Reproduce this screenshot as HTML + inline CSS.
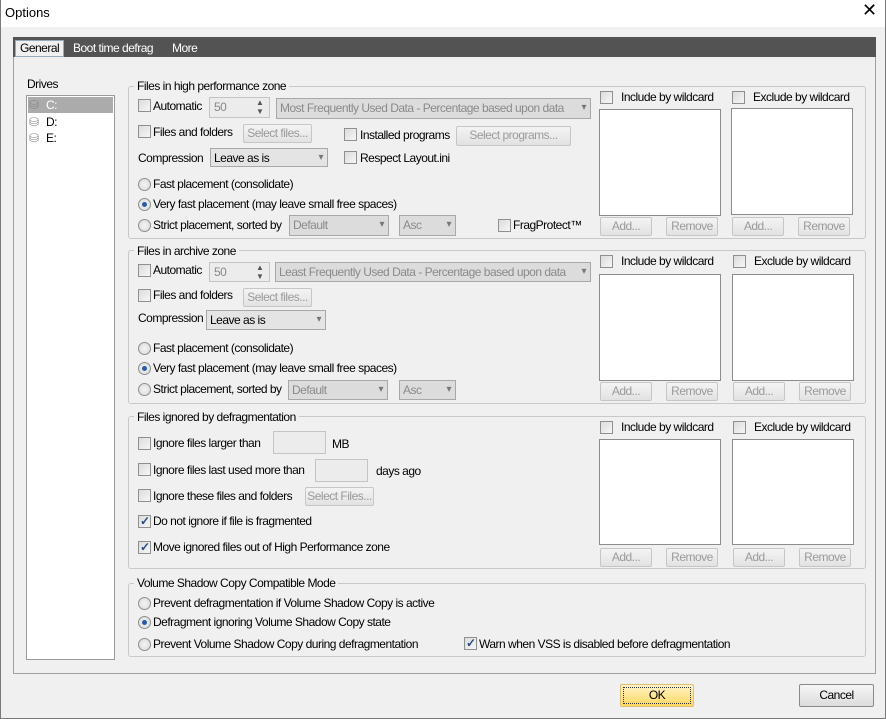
<!DOCTYPE html>
<html><head><style>
*{box-sizing:border-box;margin:0;padding:0}
body{width:886px;height:719px;background:#f0f0f0;font-family:"Liberation Sans",sans-serif;font-size:12px;color:#000;position:relative;overflow:hidden;letter-spacing:-0.5px}
.a{position:absolute}
.t{position:absolute;line-height:14px;white-space:nowrap}
.cb{position:absolute;width:13px;height:13px;border:1px solid #8e8f8f;background:linear-gradient(135deg,#dcdcdc,#f6f6f6)}
.cb.on::after{content:"✓";position:absolute;left:1px;top:-2px;font-size:12px;color:#2a4a80;font-weight:bold}
.rd{position:absolute;width:13px;height:13px;border:1px solid #8e8f8f;border-radius:50%;background:radial-gradient(circle,#f4f4f4,#d8d8d8)}
.rd.on::after{content:"";position:absolute;left:3px;top:3px;width:5px;height:5px;border-radius:50%;background:#2a5aa0}
.grp{position:absolute;border:1px solid #c8c8c8;border-radius:3px}
.gt{position:absolute;background:#f0f0f0;padding:0 3px;line-height:14px;white-space:nowrap}
.btn{position:absolute;border:1px solid #c6c6c6;border-radius:2px;background:linear-gradient(#f4f4f4,#e2e2e2);color:#9a9a9a;text-align:center;line-height:16px;white-space:nowrap;overflow:hidden}
.dd{position:absolute;border:1px solid #a8a8a8;background:#dcdcdc;color:#8a8a8a;padding-left:3px;line-height:18px;white-space:nowrap;overflow:hidden}
.dd::after{content:"▾";position:absolute;right:4px;top:0;color:#777;font-size:10px}
.dd.en{background:#e4e4e4;color:#000}
.lst{position:absolute;background:#fff;border:1px solid #8c8c8c}
.tb{position:absolute;background:#ececec;border:1px solid #c4c4c4}
</style></head><body>
<div class="a" style="left:0;top:0;width:886px;height:27px;background:#fff"></div>
<div class="t" style="left:5px;top:6px;font-size:13px;letter-spacing:0">Options</div>
<div class="t" style="left:862px;top:3px;font-size:18px">✕</div>
<div class="a" style="left:0;top:0;width:886px;height:719px;border:1px solid #7a7a7a;border-top:none"></div>

<div class="a" style="left:13px;top:37px;width:863px;height:20px;background:#535353"></div>
<div class="a" style="left:15px;top:40px;width:49px;height:17px;background:#f0f0f0;border:1px solid #9ab"></div>
<div class="t" style="left:20px;top:41px">General</div>
<div class="t" style="left:73px;top:41px;color:#fff">Boot time defrag</div>
<div class="t" style="left:172px;top:41px;color:#fff">More</div>
<div class="a" style="left:13px;top:57px;width:863px;height:617px;border:1px solid #a0a0a0;border-top:none"></div>

<div class="t" style="left:27px;top:77px">Drives</div>
<div class="lst" style="left:26px;top:95px;width:89px;height:565px;border-color:#9a9a9a"></div>
<div class="a" style="left:28px;top:97px;width:85px;height:16px;background:#ababab"></div>
<div class="t" style="left:29px;top:98px;color:#888">⛁</div><div class="t" style="left:46px;top:98px;color:#fff">C:</div>
<div class="t" style="left:29px;top:115px;color:#888">⛁</div><div class="t" style="left:46px;top:115px">D:</div>
<div class="t" style="left:29px;top:131px;color:#888">⛁</div><div class="t" style="left:46px;top:131px">E:</div>

<!-- group 1 -->
<div class="grp" style="left:128px;top:86px;width:738px;height:153px"></div>
<div class="gt" style="left:134px;top:79px">Files in high performance zone</div>
<div class="cb" style="left:138px;top:99px"></div><div class="t" style="left:153px;top:99px">Automatic</div>
<div class="tb" style="left:209px;top:97px;width:61px;height:21px;color:#888;padding-left:4px;line-height:19px">50</div>
<div class="t" style="left:256px;top:98px;font-size:8px;color:#555;line-height:9px">▲<br>▼</div>
<div class="dd" style="left:276px;top:98px;width:315px;height:21px">Most Frequently Used Data - Percentage based upon data</div>
<div class="cb" style="left:138px;top:125px"></div><div class="t" style="left:153px;top:125px">Files and folders</div>
<div class="btn" style="left:243px;top:124px;width:69px;height:19px">Select files...</div>
<div class="cb" style="left:344px;top:128px"></div><div class="t" style="left:360px;top:128px">Installed programs</div>
<div class="btn" style="left:456px;top:126px;width:115px;height:20px">Select programs...</div>
<div class="t" style="left:138px;top:151px">Compression</div>
<div class="dd en" style="left:210px;top:148px;width:118px;height:19px">Leave as is</div>
<div class="cb" style="left:344px;top:151px"></div><div class="t" style="left:360px;top:151px">Respect Layout.ini</div>
<div class="rd" style="left:138px;top:178px"></div><div class="t" style="left:153px;top:177px">Fast placement (consolidate)</div>
<div class="rd on" style="left:138px;top:198px"></div><div class="t" style="left:153px;top:197px">Very fast placement (may leave small free spaces)</div>
<div class="rd" style="left:138px;top:219px"></div><div class="t" style="left:153px;top:218px">Strict placement, sorted by</div>
<div class="dd" style="left:289px;top:215px;width:100px;height:21px">Default</div>
<div class="dd" style="left:399px;top:215px;width:57px;height:21px">Asc</div>
<div class="cb" style="left:498px;top:219px"></div><div class="t" style="left:513px;top:218px">FragProtect™</div>
<div class="cb" style="left:600px;top:91px"></div><div class="t" style="left:621px;top:90px">Include by wildcard</div>
<div class="lst" style="left:599px;top:109px;width:122px;height:107px"></div>
<div class="btn" style="left:600px;top:217px;width:52px;height:19px">Add...</div>
<div class="btn" style="left:666px;top:217px;width:52px;height:19px">Remove</div>
<div class="cb" style="left:732px;top:91px"></div><div class="t" style="left:753px;top:90px">Exclude by wildcard</div>
<div class="lst" style="left:731px;top:108px;width:122px;height:107px"></div>
<div class="btn" style="left:732px;top:217px;width:52px;height:19px">Add...</div>
<div class="btn" style="left:798px;top:217px;width:52px;height:19px">Remove</div>

<!-- group 2 -->
<div class="grp" style="left:128px;top:250px;width:738px;height:154px"></div>
<div class="gt" style="left:134px;top:244px">Files in archive zone</div>
<div class="cb" style="left:138px;top:264px"></div><div class="t" style="left:153px;top:263px">Automatic</div>
<div class="tb" style="left:209px;top:262px;width:61px;height:20px;color:#888;padding-left:4px;line-height:18px">50</div>
<div class="t" style="left:256px;top:263px;font-size:8px;color:#555;line-height:9px">▲<br>▼</div>
<div class="dd" style="left:275px;top:262px;width:316px;height:20px">Least Frequently Used Data - Percentage based upon data</div>
<div class="cb" style="left:138px;top:289px"></div><div class="t" style="left:153px;top:288px">Files and folders</div>
<div class="btn" style="left:243px;top:288px;width:69px;height:19px">Select files...</div>
<div class="t" style="left:138px;top:311px">Compression</div>
<div class="dd en" style="left:206px;top:310px;width:120px;height:20px">Leave as is</div>
<div class="rd" style="left:138px;top:342px"></div><div class="t" style="left:153px;top:341px">Fast placement (consolidate)</div>
<div class="rd on" style="left:138px;top:362px"></div><div class="t" style="left:153px;top:361px">Very fast placement (may leave small free spaces)</div>
<div class="rd" style="left:138px;top:383px"></div><div class="t" style="left:153px;top:382px">Strict placement, sorted by</div>
<div class="dd" style="left:288px;top:380px;width:100px;height:20px">Default</div>
<div class="dd" style="left:399px;top:380px;width:57px;height:20px">Asc</div>
<div class="cb" style="left:600px;top:255px"></div><div class="t" style="left:621px;top:254px">Include by wildcard</div>
<div class="lst" style="left:599px;top:274px;width:122px;height:107px"></div>
<div class="btn" style="left:600px;top:382px;width:52px;height:19px">Add...</div>
<div class="btn" style="left:666px;top:382px;width:52px;height:19px">Remove</div>
<div class="cb" style="left:733px;top:255px"></div><div class="t" style="left:754px;top:254px">Exclude by wildcard</div>
<div class="lst" style="left:732px;top:274px;width:122px;height:107px"></div>
<div class="btn" style="left:733px;top:382px;width:52px;height:19px">Add...</div>
<div class="btn" style="left:799px;top:382px;width:52px;height:19px">Remove</div>

<!-- group 3 -->
<div class="grp" style="left:128px;top:416px;width:738px;height:153px"></div>
<div class="gt" style="left:134px;top:410px">Files ignored by defragmentation</div>
<div class="cb" style="left:138px;top:437px"></div><div class="t" style="left:153px;top:436px">Ignore files larger than</div>
<div class="tb" style="left:273px;top:431px;width:53px;height:23px"></div><div class="t" style="left:332px;top:437px">MB</div>
<div class="cb" style="left:138px;top:463px"></div><div class="t" style="left:153px;top:463px">Ignore files last used more than</div>
<div class="tb" style="left:315px;top:459px;width:53px;height:23px"></div><div class="t" style="left:376px;top:464px">days ago</div>
<div class="cb" style="left:138px;top:489px"></div><div class="t" style="left:153px;top:489px">Ignore these files and folders</div>
<div class="btn" style="left:305px;top:487px;width:69px;height:19px">Select Files...</div>
<div class="cb on" style="left:138px;top:515px"></div><div class="t" style="left:153px;top:514px">Do not ignore if file is fragmented</div>
<div class="cb on" style="left:138px;top:541px"></div><div class="t" style="left:153px;top:540px">Move ignored files out of High Performance zone</div>
<div class="cb" style="left:600px;top:421px"></div><div class="t" style="left:621px;top:420px">Include by wildcard</div>
<div class="lst" style="left:599px;top:439px;width:122px;height:106px"></div>
<div class="btn" style="left:600px;top:548px;width:52px;height:19px">Add...</div>
<div class="btn" style="left:666px;top:548px;width:52px;height:19px">Remove</div>
<div class="cb" style="left:733px;top:421px"></div><div class="t" style="left:754px;top:420px">Exclude by wildcard</div>
<div class="lst" style="left:732px;top:439px;width:122px;height:106px"></div>
<div class="btn" style="left:733px;top:548px;width:52px;height:19px">Add...</div>
<div class="btn" style="left:799px;top:548px;width:52px;height:19px">Remove</div>

<!-- group 4 -->
<div class="grp" style="left:128px;top:583px;width:738px;height:74px"></div>
<div class="gt" style="left:134px;top:576px">Volume Shadow Copy Compatible Mode</div>
<div class="rd" style="left:138px;top:597px"></div><div class="t" style="left:153px;top:596px">Prevent defragmentation if Volume Shadow Copy is active</div>
<div class="rd on" style="left:138px;top:616px"></div><div class="t" style="left:153px;top:615px">Defragment ignoring Volume Shadow Copy state</div>
<div class="rd" style="left:138px;top:638px"></div><div class="t" style="left:153px;top:637px">Prevent Volume Shadow Copy during defragmentation</div>
<div class="cb on" style="left:464px;top:637px"></div><div class="t" style="left:479px;top:637px">Warn when VSS is disabled before defragmentation</div>

<div class="btn" style="left:620px;top:684px;width:74px;height:23px;color:#000;line-height:21px;border-color:#e0c070;background:linear-gradient(#fff4c8,#ffd860);outline:1px dotted #333;outline-offset:-4px">OK</div>
<div class="btn" style="left:799px;top:684px;width:75px;height:23px;color:#000;line-height:21px;border-color:#8a8a8a;background:linear-gradient(#f6f6f6,#dcdcdc)">Cancel</div>
</body></html>
